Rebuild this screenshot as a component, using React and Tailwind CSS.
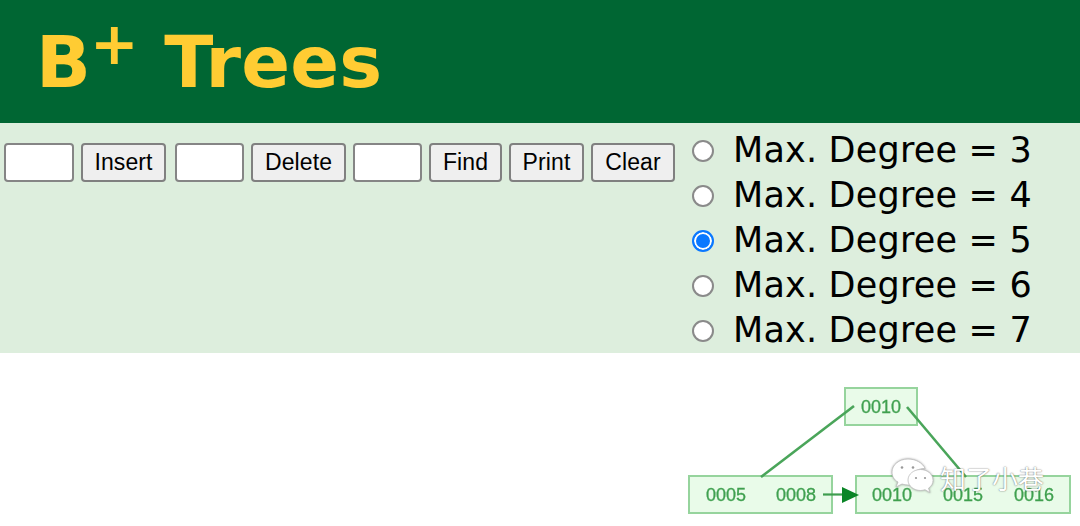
const sans = "font-['Liberation_Sans',Arial,sans-serif]";
const verdana = "font-['DejaVu_Sans',Verdana,sans-serif]";

function Field({ w = "w-[69px]" }) {
  return <input type="text" className={`${w} h-[39px] bg-white border-2 border-[#858585] rounded-[4px]`} />;
}
function Btn({ w, children, className = "" }) {
  return (
    <button className={`h-[39px] bg-[#efefef] border-2 border-[#808080] rounded-[4px] text-[23px] tracking-[0.1px] leading-none text-black ${sans} ${w} ${className}`}>
      {children}
    </button>
  );
}
function Radio({ n, checked }) {
  return (
    <label className="flex items-center h-[45px]">
      <input
        type="radio"
        name="degree"
        defaultChecked={checked}
        className="appearance-none w-[22px] h-[22px] rounded-full bg-white border-2 border-[#8a8a8a] checked:border-[#0a78ff] checked:bg-[#0a78ff] checked:shadow-[inset_0_0_0_2px_white] shrink-0"
      />
      <span className={`ml-[19px] text-[35px] leading-none tracking-[0.2px] text-black whitespace-pre ${verdana}`}>Max. Degree = {n}</span>
    </label>
  );
}

const labels = [[726, "0005"], [796, "0008"], [892, "0010"], [963, "0015"], [1034, "0016"]];

function Diagram() {
  return (
    <svg viewBox="680 353 400 173" className="w-[400px] h-[173px] block blur-[0.7px]">
      <g fill="#e9fbe9" stroke="#96d49d" strokeWidth="2">
        <rect x="845" y="388" width="72" height="37" />
        <rect x="689" y="476" width="143" height="37" />
        <rect x="856" y="476" width="214" height="37" />
      </g>
      <g stroke="#4aa55a" strokeWidth="2.6" fill="none">
        <line x1="854" y1="406" x2="761" y2="477" />
        <line x1="907" y1="407" x2="966" y2="477" />
      </g>
      <line x1="823" y1="494.5" x2="845" y2="494.5" stroke="#3f9d4f" strokeWidth="2.2" />
      <polygon points="842,487 859,495 842,503" fill="#0a8526" />
      <g fill="#3fa04f" stroke="#3fa04f" strokeWidth="0.3" fontSize="18" textAnchor="middle" fontFamily="Liberation Sans, Arial, sans-serif">
        <text x="881" y="413">0010</text>
        {labels.map(([x, t]) => (
          <text key={x} x={x} y="501">{t}</text>
        ))}
      </g>
    </svg>
  );
}

function WeChat() {
  return (
    <svg width="44" height="40" viewBox="0 0 44 40" className="block drop-shadow-[0_0_1px_rgba(0,0,0,0.35)]">
      <path d="M17 1C8 1 1 7 1 14c0 4 2 8 6 10l-2 5 6-3c2 .6 4 1 6 1 1 0 2 0 3-.2-.5-1.400-.8-2.800-.8-4.300 0-7 6.500-12 14-12h1C31.500 5 25 1 17 1Z" fill="#fff" stroke="#bdbdbd" strokeWidth=".8" />
      <path d="M42 22c0-6-6-10.500-12.500-10.500S17 16 17 22s6 10.500 12.500 10.500c1.600 0 3-.3 4.500-.8l5 3-1.500-4.500c3-2 4.500-4.800 4.500-7.700Z" fill="#fff" stroke="#bdbdbd" strokeWidth=".8" />
      <circle cx="11" cy="9.500" r="1.300" fill="#999" />
      <circle cx="22" cy="9.500" r="1.300" fill="#999" />
      <circle cx="25" cy="20" r="1.100" fill="#999" />
      <circle cx="34" cy="20" r="1.100" fill="#999" />
    </svg>
  );
}

export default function App() {
  return (
    <div className="w-[1080px] h-[526px] overflow-hidden bg-white">
      <header className="h-[123px] bg-[#006633] pl-[36px] pt-[24px]">
        <h1 className={`text-[72px] font-bold text-[#ffcc33] leading-[76px] tracking-[0.2px] whitespace-pre ${verdana}`}>
          B<sup className="text-[58px] font-bold leading-none relative top-[-23px] ml-[-1px] align-baseline">+</sup> Trees
        </h1>
      </header>
      <section className="h-[230px] bg-[#ddeedd] flex">
        <div className="w-[692px] shrink-0 pl-[4px] pt-[20px] flex items-start gap-[7px]">
          <Field w="w-[70px]" />
          <Btn w="w-[85px]" className="mr-[2px]">Insert</Btn>
          <Field />
          <Btn w="w-[95px]">Delete</Btn>
          <Field />
          <Btn w="w-[73px]">Find</Btn>
          <Btn w="w-[75px]">Print</Btn>
          <Btn w="w-[84px]">Clear</Btn>
        </div>
        <div className="flex flex-col pt-[5px]">
          <Radio n={3} />
          <Radio n={4} />
          <Radio n={5} checked />
          <Radio n={6} />
          <Radio n={7} />
        </div>
      </section>
      <section className="relative flex justify-end h-[173px]">
        <Diagram />
        <div className="absolute left-[891px] top-[105px] flex items-center gap-[5px]">
          <WeChat />
          <span className="text-[26px] leading-none text-white [text-shadow:0_0_1.5px_#444] whitespace-pre font-['Noto_Sans_CJK_SC',sans-serif]">知了小巷</span>
        </div>
      </section>
    </div>
  );
}
